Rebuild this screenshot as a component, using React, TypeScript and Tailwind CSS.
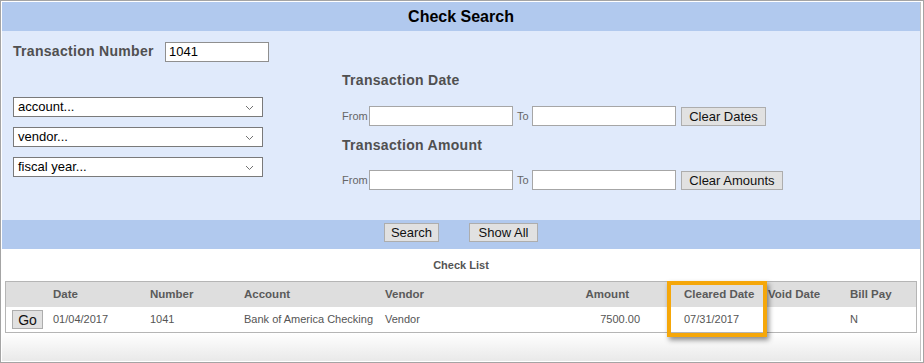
import React from 'react';

const font = { fontFamily: '"Liberation Sans", Arial, sans-serif' };

function Chevron() {
  return (
    <svg width="9" height="6" viewBox="0 0 9 6" className="absolute right-[8px] top-[7px]">
      <path d="M1 1 L4.5 4.5 L8 1" fill="none" stroke="#707070" strokeWidth="1" />
    </svg>
  );
}

function FakeSelect({ label }: { label: string }) {
  return (
    <div className="relative h-[20px] w-[250px] border border-[#7a7a7a] bg-white pl-[4px] text-[13px] leading-[18px] text-black">
      {label}
      <Chevron />
    </div>
  );
}

function Btn({ children, className = '' }: { children: React.ReactNode; className?: string }) {
  return (
    <div
      className={`flex h-[19px] items-center justify-center border border-[#adadad] bg-[#e1e1e1] text-[13px] leading-none text-[#111] ${className}`}
    >
      {children}
    </div>
  );
}

function RangeRow({ button, btnWidth }: { button: string; btnWidth: string }) {
  return (
    <div className="flex h-[20px] items-center">
      <span className="w-[27px] text-[11px] text-[#666]">From</span>
      <div className="h-[20px] w-[144px] border border-[#a6a6a6] bg-white" />
      <span className="w-[19px] pl-[4px] text-[11px] text-[#666]">To</span>
      <div className="h-[20px] w-[144px] border border-[#a6a6a6] bg-white" />
      <Btn className={`ml-[5px] ${btnWidth}`}>{button}</Btn>
    </div>
  );
}

const cols = 'grid grid-cols-[42px_97px_94px_141px_100px_199px_84px_82px_71px] whitespace-nowrap';

export default function App() {
  return (
    <div style={font} className="h-[363px] w-[924px] overflow-hidden border border-[#a4a4a4] bg-white">
      <div className="ml-[1px] mt-[1px] w-[919px] border-r border-[#c4c4c4]">
        {/* header */}
        <div className="flex h-[29px] items-center justify-center bg-[#b1c9ee] text-[16px] font-bold text-black">
          Check Search
        </div>

        {/* form */}
        <div className="flex h-[189px] bg-[#e0eafb]">
          <div className="w-[340px] pl-[11px] pt-[10px]">
            <div className="flex items-center">
              <span className="w-[152px] text-[14px] font-bold tracking-[0.3px] text-[#505050]">Transaction Number</span>
              <div className="h-[20px] w-[104px] border border-[#8f8f8f] bg-white pl-[3px] text-[13px] leading-[18px] text-black">
                1041
              </div>
            </div>
            <div className="mt-[35px] flex flex-col gap-[10px]">
              <FakeSelect label="account..." />
              <FakeSelect label="vendor..." />
              <FakeSelect label="fiscal year..." />
            </div>
          </div>
          <div className="pt-[39px]">
            <div className="h-[20px] text-[14px] font-bold leading-[20px] tracking-[0.3px] text-[#505050]">Transaction Date</div>
            <div className="mt-[16px]">
              <RangeRow button="Clear Dates" btnWidth="w-[85px]" />
            </div>
            <div className="mt-[9px] h-[20px] text-[14px] font-bold leading-[20px] tracking-[0.3px] text-[#505050]">Transaction Amount</div>
            <div className="mt-[15px]">
              <RangeRow button="Clear Amounts" btnWidth="w-[102px]" />
            </div>
          </div>
        </div>

        {/* action bar */}
        <div className="flex h-[29px] items-start justify-center gap-[30px] bg-[#b1c9ee] pt-[3px]">
          <Btn className="w-[55px]">Search</Btn>
          <Btn className="w-[69px]">Show All</Btn>
        </div>

        {/* check list */}
        <div className="relative bg-white">
          <div className="pt-[10px] text-center text-[11px] font-bold leading-[13px] text-[#555]">Check List</div>
          <div className="ml-[3px] mt-[9px] w-[912px] border border-[#b5b5b5] text-[11px] text-[#555]">
            <div className={`${cols} h-[25px] items-center bg-[#dedede] text-[11.5px] font-bold text-[#5a5a5a]`}>
              <span />
              <span className="pl-[5px]">Date</span>
              <span className="pl-[5px]">Number</span>
              <span className="pl-[5px]">Account</span>
              <span className="pl-[5px]">Vendor</span>
              <span className="pr-[50px] text-right">Amount</span>
              <span className="pl-[5px]">Cleared Date</span>
              <span className="pl-[5px]">Void Date</span>
              <span className="pl-[5px]">Bill Pay</span>
            </div>
            <div className={`${cols} h-[25px] items-center bg-white`}>
              <span className="pl-[6px]">
                <Btn className="h-[18px] w-[31px] text-[14px]">Go</Btn>
              </span>
              <span className="pl-[5px]">01/04/2017</span>
              <span className="pl-[5px]">1041</span>
              <span className="pl-[5px]">Bank of America Checking</span>
              <span className="pl-[5px]">Vendor</span>
              <span className="pr-[39px] text-right">7500.00</span>
              <span className="pl-[5px]">07/31/2017</span>
              <span className="pl-[5px]" />
              <span className="pl-[5px]">N</span>
            </div>
          </div>
          <div className="h-[28px] bg-gradient-to-b from-white via-[#f4f4f4] to-[#e9e9e9]" />

          {/* highlight */}
          <div className="absolute left-[665px] top-[32px] h-[56px] w-[100px] border-[4px] border-[#f5a70a] shadow-[2px_3px_5px_rgba(0,0,0,0.45)]" />
        </div>
      </div>
    </div>
  );
}
